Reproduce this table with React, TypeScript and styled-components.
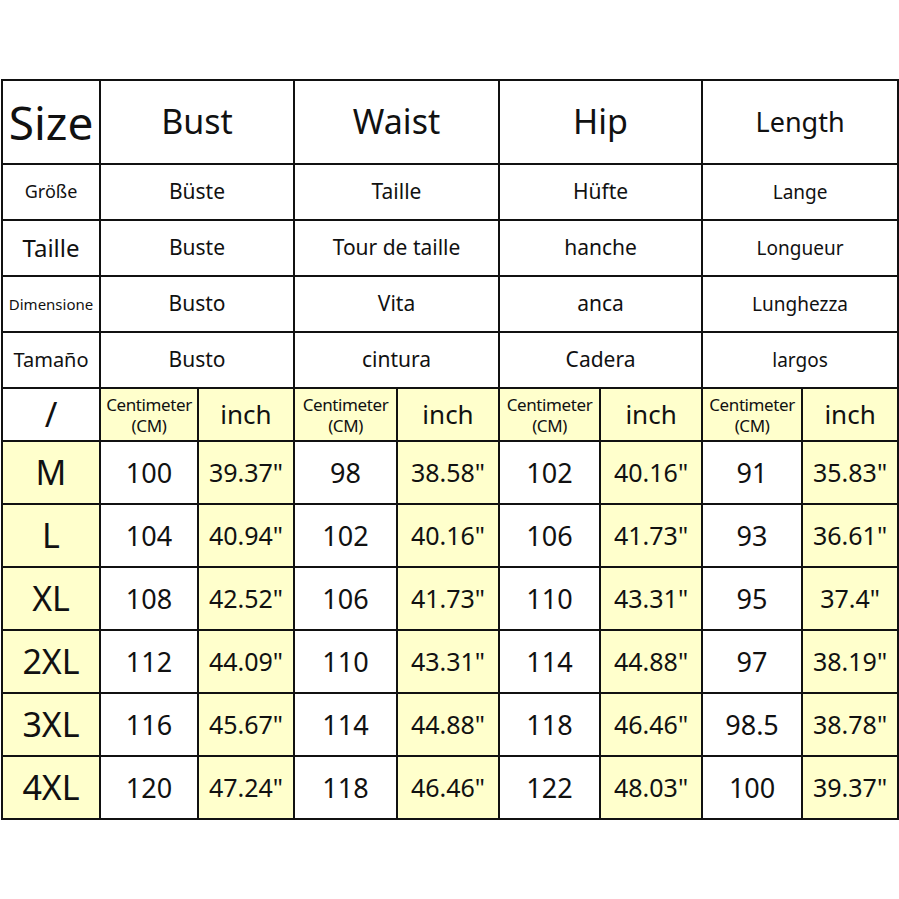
import styled, { createGlobalStyle } from 'styled-components';

const GlobalStyle = createGlobalStyle`
  html, body {
    margin: 0;
    padding: 0;
    background: #ffffff;
  }

  body {
    font-family: 'Noto Sans', 'Open Sans', sans-serif;
    color: #111;
  }
`;

const YELLOW = '#ffffcc';

const Page = styled.div`
  width: 899px;
  height: 899px;
  padding: 79px 0 0 1px;
  box-sizing: border-box;
`;

const Table = styled.table`
  border-collapse: collapse;
  table-layout: fixed;
  width: 897px;
`;

const Row = styled.tr<{ $h: number }>`
  height: ${(p) => p.$h}px;
`;

const Cell = styled.td<{ $size: number; $yellow?: boolean }>`
  border: 2px solid #111;
  padding: 0;
  text-align: center;
  vertical-align: middle;
  font-size: ${(p) => p.$size}px;
  line-height: 1.1;
  background: ${(p) => (p.$yellow ? YELLOW : '#fff')};
  white-space: nowrap;
  overflow: hidden;
`;

const UnitLabel = styled.div`
  font-size: 17px;
  line-height: 21px;
  letter-spacing: -0.4px;
  padding-top: 1px;
`;

const colWidths = [98, 98, 96, 103, 102, 101, 102, 100, 96];

const labelRows = [
  { size: { t: 'Größe', s: 18 }, items: ['Büste', 'Taille', 'Hüfte', 'Lange'], fs: [21, 21, 21, 19] },
  { size: { t: 'Taille', s: 24 }, items: ['Buste', 'Tour de taille', 'hanche', 'Longueur'], fs: [21, 21, 21, 19] },
  { size: { t: 'Dimensione', s: 15 }, items: ['Busto', 'Vita', 'anca', 'Lunghezza'], fs: [21, 21, 21, 19] },
  { size: { t: 'Tamaño', s: 20 }, items: ['Busto', 'cintura', 'Cadera', 'largos'], fs: [21, 21, 21, 19] },
];

const sizes: [string, string[]][] = [
  ['M', ['100', '39.37"', '98', '38.58"', '102', '40.16"', '91', '35.83"']],
  ['L', ['104', '40.94"', '102', '40.16"', '106', '41.73"', '93', '36.61"']],
  ['XL', ['108', '42.52"', '106', '41.73"', '110', '43.31"', '95', '37.4"']],
  ['2XL', ['112', '44.09"', '110', '43.31"', '114', '44.88"', '97', '38.19"']],
  ['3XL', ['116', '45.67"', '114', '44.88"', '118', '46.46"', '98.5', '38.78"']],
  ['4XL', ['120', '47.24"', '118', '46.46"', '122', '48.03"', '100', '39.37"']],
];

export default function App() {
  return (
    <>
      <GlobalStyle />
      <Page>
        <Table>
          <colgroup>
            {colWidths.map((w, i) => (
              <col key={i} style={{ width: w }} />
            ))}
          </colgroup>
          <tbody>
            <Row $h={84}>
              <Cell $size={46}>Size</Cell>
              <Cell $size={34} colSpan={2}>Bust</Cell>
              <Cell $size={34} colSpan={2}>Waist</Cell>
              <Cell $size={34} colSpan={2}>Hip</Cell>
              <Cell $size={27} colSpan={2}>Length</Cell>
            </Row>
            {labelRows.map((r) => (
              <Row $h={56} key={r.size.t}>
                <Cell $size={r.size.s}>{r.size.t}</Cell>
                {r.items.map((t, i) => (
                  <Cell $size={r.fs[i]} colSpan={2} key={i}>
                    {t}
                  </Cell>
                ))}
              </Row>
            ))}
            <Row $h={53}>
              <Cell $size={34}>/</Cell>
              {[0, 1, 2, 3].map((i) => [
                <Cell $size={17} $yellow key={`c${i}`}>
                  <UnitLabel>
                    Centimeter
                    <br />
                    (CM)
                  </UnitLabel>
                </Cell>,
                <Cell $size={26} $yellow key={`i${i}`}>
                  inch
                </Cell>,
              ])}
            </Row>
            {sizes.map(([label, values]) => (
              <Row $h={63} key={label}>
                <Cell $size={34} $yellow>
                  {label}
                </Cell>
                {values.map((v, i) => (
                  <Cell $size={i % 2 ? 25 : 27} $yellow={i % 2 === 1} key={i}>
                    {v}
                  </Cell>
                ))}
              </Row>
            ))}
          </tbody>
        </Table>
      </Page>
    </>
  );
}
